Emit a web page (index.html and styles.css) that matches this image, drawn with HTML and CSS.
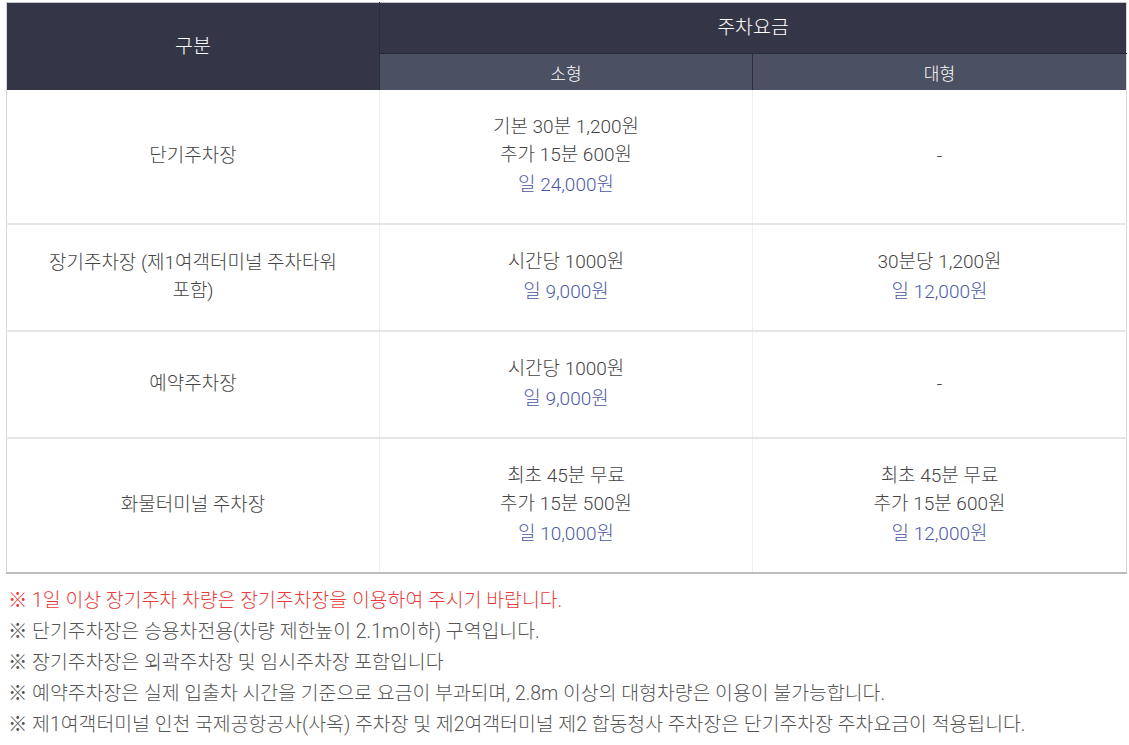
FILE: index.html
```html
<!DOCTYPE html>
<html lang="ko">
<head>
<meta charset="utf-8">
<title>주차요금</title>
<link rel="stylesheet" href="styles.css">
</head>
<body>
<div class="wrap">
  <table class="fee">
    <colgroup>
      <col class="c1"><col class="c2"><col class="c3">
    </colgroup>
    <thead>
      <tr class="h1">
        <th rowspan="2" class="first">구분</th>
        <th colspan="2" class="main">주차요금</th>
      </tr>
      <tr class="h2">
        <th class="sub">소형</th>
        <th class="sub">대형</th>
      </tr>
    </thead>
    <tbody>
      <tr>
        <td>단기주차장</td>
        <td>기본 30분 1,200원<br>추가 15분 600원<span class="day">일 24,000원</span></td>
        <td>-</td>
      </tr>
      <tr>
        <td>장기주차장 (제1여객터미널 주차타워<br>포함)</td>
        <td>시간당 1000원<span class="day">일 9,000원</span></td>
        <td>30분당 1,200원<span class="day">일 12,000원</span></td>
      </tr>
      <tr>
        <td>예약주차장</td>
        <td>시간당 1000원<span class="day">일 9,000원</span></td>
        <td>-</td>
      </tr>
      <tr class="last">
        <td>화물터미널 주차장</td>
        <td>최초 45분 무료<br>추가 15분 500원<span class="day">일 10,000원</span></td>
        <td>최초 45분 무료<br>추가 15분 600원<span class="day">일 12,000원</span></td>
      </tr>
    </tbody>
  </table>
  <ul class="notes">
    <li class="red">※ 1일 이상 장기주차 차량은 장기주차장을 이용하여 주시기 바랍니다.</li>
    <li>※ 단기주차장은 승용차전용(차량 제한높이 2.1m이하) 구역입니다.</li>
    <li>※ 장기주차장은 외곽주차장 및 임시주차장 포함입니다</li>
    <li>※ 예약주차장은 실제 입출차 시간을 기준으로 요금이 부과되며, 2.8m 이상의 대형차량은 이용이 불가능합니다.</li>
    <li>※ 제1여객터미널 인천 국제공항공사(사옥) 주차장 및 제2여객터미널 제2 합동청사 주차장은 단기주차장 주차요금이 적용됩니다.</li>
  </ul>
</div>
</body>
</html>
```

FILE: styles.css
```css
html, body {
  margin: 0;
  padding: 0;
  background: #ffffff;
}
body {
  font-family: Roboto, "Noto Sans CJK KR", sans-serif;
  font-weight: 300;
  color: #444444;
  font-size: 19px;
}
.wrap {
  padding: 2px 3px 0 6px;
}
.fee {
  width: 1120px;
  border-collapse: collapse;
  table-layout: fixed;
  border-top: 1px solid #c4c6cc;
  border-left: 1px solid #d8d9dd;
  border-right: 1px solid #d8d9dd;
  border-bottom: 2px solid #bdbdbd;
}
.c1 { width: 373px; }
.c2 { width: 373px; }
.c3 { width: 374px; }
.fee th {
  font-weight: 300;
  color: #ffffff;
  padding: 0;
  text-align: center;
}
.h1 th {
  background: #343647;
  height: 50px;
  line-height: 24px;
  font-size: 19.5px;
}
.h1 th.first {
  border-right: 1px solid #2b2d3b;
}
.h1 th.main {
  border-bottom: 1px solid #272936;
}
.h2 th {
  background: #4c5063;
  height: 36px;
  font-size: 17px;
}
.h2 th + th {
  border-left: 1px solid #2b2d3b;
}
.fee td {
  text-align: center;
  vertical-align: middle;
  line-height: 28px;
  padding: 23px 10px 24px;
  border-bottom: 2px solid #e6e6e6;
  border-right: 1px solid #f0f0f0;
  font-size: 19px;
  color: #444444;
}
.fee td:last-child {
  border-right: none;
}
.fee tr.last td {
  border-bottom: none;
}
.day {
  display: block;
  color: #4c5aa6;
  margin-top: 2px;
}
.notes {
  list-style: none;
  margin: 11px 0 0 2px;
  padding: 0;
}
.notes li {
  font-size: 19.4px;
  line-height: 31px;
  color: #555555;
  white-space: nowrap;
}
.notes li.red {
  color: #e63c3c;
}
```
